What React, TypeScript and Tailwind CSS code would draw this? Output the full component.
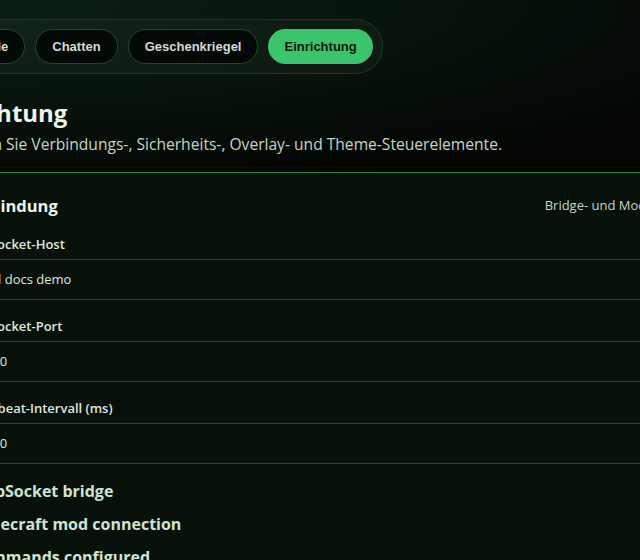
const tabs = ["Übersicht", "Konsole", "Chatten", "Geschenkriegel", "Einrichtung"];

const fields = [
  { label: "WebSocket-Host", value: "Local docs demo" },
  { label: "WebSocket-Port", value: "25560" },
  { label: "Heartbeat-Intervall (ms)", value: "15000" },
];

const status = ["WebSocket bridge", "Minecraft mod connection", "Commands configured"];

export default function App() {
  return (
    <div className="w-[640px] h-[560px] overflow-hidden bg-[#07110a] font-['Segoe_UI','Open_Sans',sans-serif]">
      <div className="w-[856px] -ml-[103px]">
        {/* Header */}
        <header className="bg-[radial-gradient(ellipse_at_0%_0%,#0c2014_0%,#07130b_45%,#030503_80%)] border-b border-[#1f8038] px-8 pt-[19px] pb-[17px]">
          <nav className="-ml-[103px] inline-flex items-center gap-[10px] rounded-full border border-[#1a3a22] bg-white/[0.03] p-[9px] font-['Liberation_Sans',Arial,sans-serif]">
            {tabs.map((t) => (
              <button
                key={t}
                className={
                  t === "Einrichtung"
                    ? "h-[35px] px-4 rounded-full bg-[#3cc46c] text-[#0a1a0e] text-[13px] font-bold"
                    : "h-[35px] px-4 rounded-full bg-[#030a05] border border-[#1f4a2a] text-[#d2dad2] text-[13px] font-bold"
                }
              >
                {t}
              </button>
            ))}
          </nav>
          <h1 className="mt-[23px] text-[24px] leading-8 font-bold text-[#eef4ee]">Einrichtung</h1>
          <p className="mt-[4px] text-[15.6px] leading-[22px] text-[#c6d6c6]">
            Verwalten Sie Verbindungs-, Sicherheits-, Overlay- und Theme-Steuerelemente.
          </p>
        </header>

        {/* Verbindung */}
        <section className="pl-[65px] pr-8">
          <div className="flex items-center justify-between pt-[20px] h-[45px]">
            <h2 className="text-[16.5px] leading-[25px] font-bold text-[#eef4ee]">Verbindung</h2>
            <span className="text-[13px] text-[#c6d6c6]">Bridge- und Mod-Verbindung</span>
          </div>
          {fields.map((f) => (
            <div key={f.label} className="-mr-8">
              <div className="pt-[17px] pb-[6px] border-b border-[#1d4d2a] text-[13px] leading-[18px] font-semibold text-[#dfe8df]">
                {f.label}
              </div>
              <div className="h-[40px] px-[8px] flex items-center border-b border-[#1d4d2a] text-[13px] font-medium text-[#dfe8df]">
                {f.value}
              </div>
            </div>
          ))}
          <ul className="pl-[8px] pt-[16px] flex flex-col gap-[10px]">
            {status.map((s) => (
              <li key={s} className="text-[16px] leading-[23px] font-bold text-[#cfe4cf]">
                {s}
              </li>
            ))}
          </ul>
        </section>
      </div>
    </div>
  );
}
